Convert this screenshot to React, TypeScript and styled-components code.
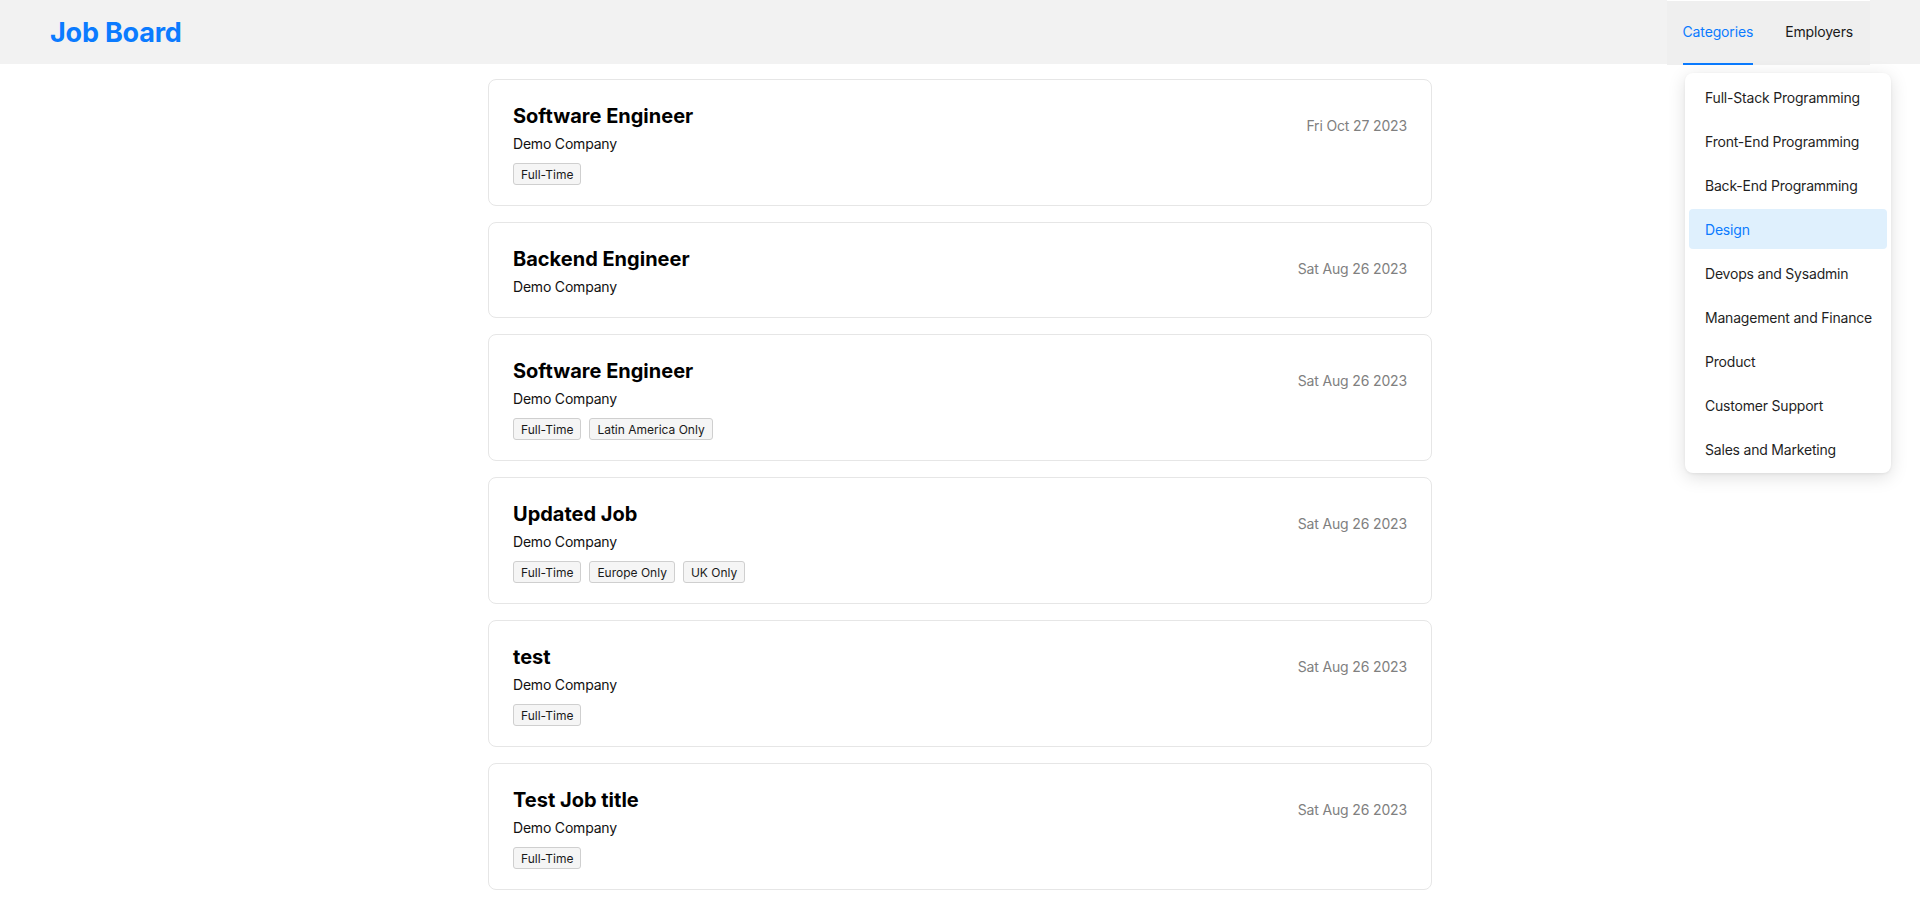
import React from "react";
import styled, { createGlobalStyle } from "styled-components";

const GlobalStyle = createGlobalStyle`
  * { box-sizing: border-box; }
  html, body { margin: 0; padding: 0; background: #ffffff; }
  body {
    font-family: Inter, "Noto Sans", "Liberation Sans", sans-serif;
    color: #111;
    -webkit-font-smoothing: antialiased;
  }
`;

const BLUE = "#0b7bff";

const Page = styled.div`
  position: relative;
  min-height: 903px;
`;

const Header = styled.header`
  height: 64px;
  background: #f2f2f2;
  display: flex;
  align-items: stretch;
  justify-content: space-between;
  padding: 0 50px 0 50px;
`;

const Logo = styled.div`
  display: flex;
  align-items: center;
  font-size: 27px;
  font-weight: 700;
  color: ${BLUE};
  letter-spacing: -0.2px;
`;

const Nav = styled.nav`
  display: flex;
  align-items: stretch;
  gap: 32px;
  padding: 0 17px 0 16px;
  background: #efefef;
  border-top: 1px solid #ffffff;
  height: 65px;
`;

const NavItem = styled.div<{ $active?: boolean }>`
  display: flex;
  align-items: center;
  font-size: 14px;
  letter-spacing: -0.15px;
  padding-bottom: 1px;
  color: ${(p) => (p.$active ? BLUE : "#1a1a1a")};
  border-bottom: 2px solid ${(p) => (p.$active ? BLUE : "transparent")};
`;

const Menu = styled.div`
  position: absolute;
  top: 73px;
  left: 1685px;
  width: 206px;
  padding: 4px;
  background: #fff;
  border-radius: 8px;
  box-shadow: 0 4px 18px rgba(0, 0, 0, 0.13), 0 1px 3px rgba(0, 0, 0, 0.06);
  display: flex;
  flex-direction: column;
  gap: 4px;
`;

const MenuItem = styled.div<{ $active?: boolean }>`
  height: 40px;
  display: flex;
  align-items: center;
  padding: 0 16px;
  font-size: 14px;
  letter-spacing: -0.2px;
  border-radius: 4px;
  color: ${(p) => (p.$active ? BLUE : "#1f1f1f")};
  background: ${(p) => (p.$active ? "#dff0fd" : "transparent")};
  white-space: nowrap;
`;

const List = styled.main`
  width: 944px;
  margin: 15px auto 0;
  display: flex;
  flex-direction: column;
  gap: 16px;
`;

const Card = styled.div`
  border: 1px solid #e6e6e6;
  border-radius: 8px;
  padding: 24px 24px 20px;
  display: flex;
  justify-content: space-between;
  align-items: flex-start;
`;

const Info = styled.div`
  display: flex;
  flex-direction: column;
`;

const Title = styled.div`
  font-size: 20px;
  line-height: 24px;
  font-weight: 700;
  color: #000;
  letter-spacing: 0;
`;

const Company = styled.div`
  font-size: 14px;
  line-height: 20px;
  margin-top: 6px;
  color: #111;
  letter-spacing: -0.2px;
`;

const Tags = styled.div`
  display: flex;
  gap: 8px;
  margin-top: 9px;
`;

const Tag = styled.span`
  height: 22px;
  display: inline-flex;
  align-items: center;
  padding: 0 7px;
  font-size: 12px;
  color: #1a1a1a;
  background: #f5f5f5;
  border: 1px solid #cfcfcf;
  border-radius: 3px;
`;

const DateText = styled.div`
  font-size: 14px;
  line-height: 20px;
  margin-top: 12px;
  color: #808080;
  letter-spacing: -0.15px;
  white-space: nowrap;
`;

const categories = [
  "Full-Stack Programming",
  "Front-End Programming",
  "Back-End Programming",
  "Design",
  "Devops and Sysadmin",
  "Management and Finance",
  "Product",
  "Customer Support",
  "Sales and Marketing",
];

const jobs = [
  { title: "Software Engineer", date: "Fri Oct 27 2023", tags: ["Full-Time"] },
  { title: "Backend Engineer", date: "Sat Aug 26 2023", tags: [] as string[] },
  { title: "Software Engineer", date: "Sat Aug 26 2023", tags: ["Full-Time", "Latin America Only"] },
  { title: "Updated Job", date: "Sat Aug 26 2023", tags: ["Full-Time", "Europe Only", "UK Only"] },
  { title: "test", date: "Sat Aug 26 2023", tags: ["Full-Time"] },
  { title: "Test Job title", date: "Sat Aug 26 2023", tags: ["Full-Time"] },
];

export default function App() {
  return (
    <Page>
      <GlobalStyle />
      <Header>
        <Logo>Job Board</Logo>
        <Nav>
          <NavItem $active>Categories</NavItem>
          <NavItem>Employers</NavItem>
        </Nav>
      </Header>
      <List>
        {jobs.map((j, i) => (
          <Card key={i}>
            <Info>
              <Title>{j.title}</Title>
              <Company>Demo Company</Company>
              {j.tags.length > 0 && (
                <Tags>
                  {j.tags.map((t) => (
                    <Tag key={t}>{t}</Tag>
                  ))}
                </Tags>
              )}
            </Info>
            <DateText>{j.date}</DateText>
          </Card>
        ))}
      </List>
      <Menu>
        {categories.map((c) => (
          <MenuItem key={c} $active={c === "Design"}>
            {c}
          </MenuItem>
        ))}
      </Menu>
    </Page>
  );
}
